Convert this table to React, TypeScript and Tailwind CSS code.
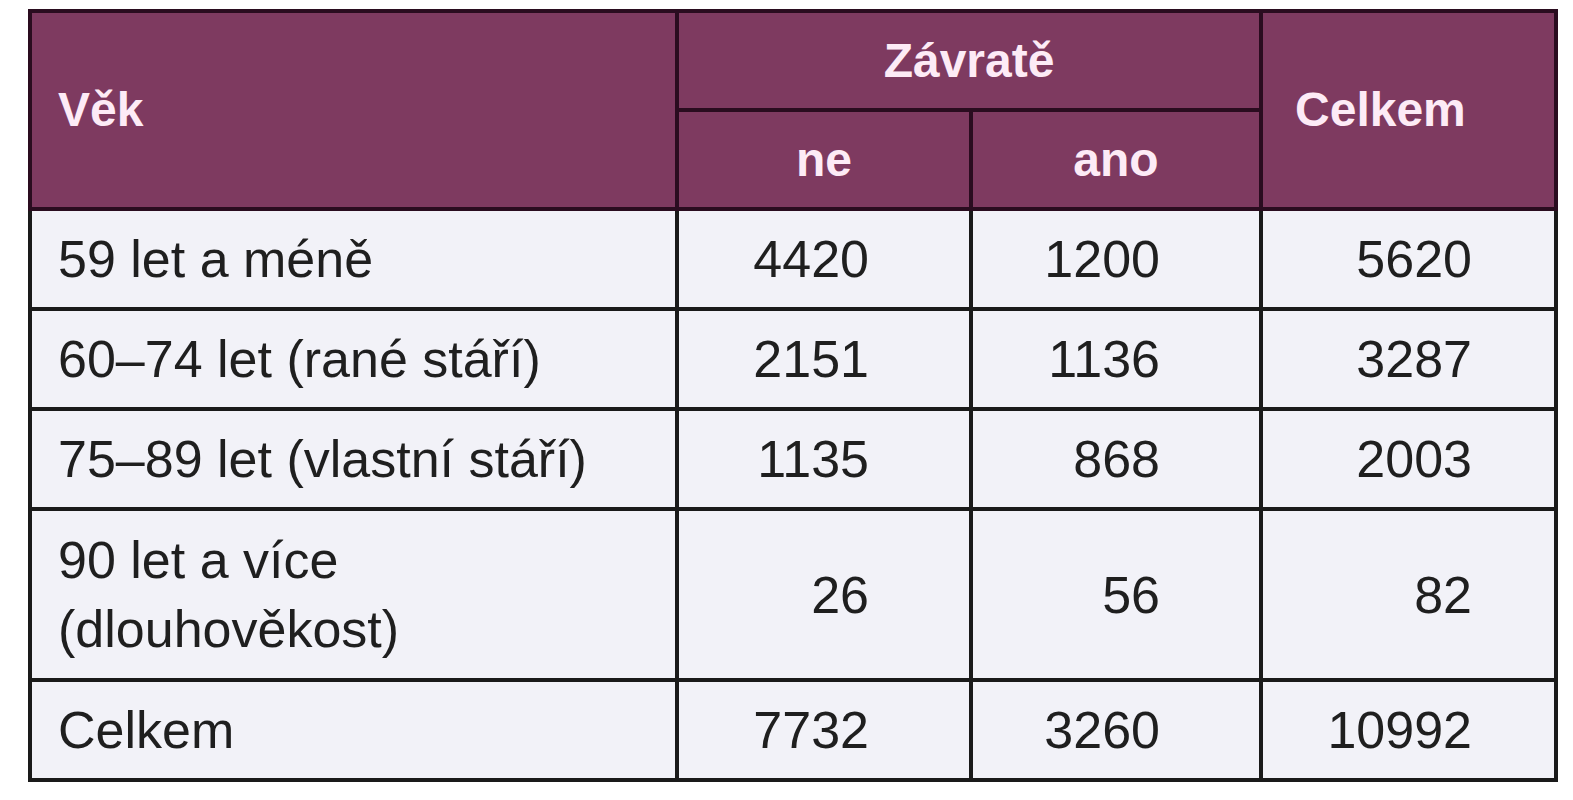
const rows: { label: React.ReactNode; ne: string; ano: string; total: string; tall?: boolean }[] = [
  { label: "59 let a méně", ne: "4420", ano: "1200", total: "5620" },
  { label: "60–74 let (rané stáří)", ne: "2151", ano: "1136", total: "3287" },
  { label: "75–89 let (vlastní stáří)", ne: "1135", ano: "868", total: "2003" },
  {
    label: (
      <>
        90 let a více
        <br />
        (dlouhověkost)
      </>
    ),
    ne: "26",
    ano: "56",
    total: "82",
    tall: true,
  },
  { label: "Celkem", ne: "7732", ano: "3260", total: "10992" },
];

const head = "border-[4px] border-[#2a0c1f] bg-[#7e3a60] font-bold text-[#fdebf6]";
const cell = "border-[4px] border-[#1a1a1a] bg-[#f2f2f8] text-[#1f1f1f]";

export default function App() {
  return (
    <div className="min-h-screen bg-white pl-[28px] pt-[9px] font-['Liberation_Sans',Arial,sans-serif]">
      <table className="w-[1526px] table-fixed border-collapse text-[52px] leading-none">
        <colgroup>
          <col className="w-[647px]" />
          <col className="w-[294px]" />
          <col className="w-[290px]" />
          <col className="w-[295px]" />
        </colgroup>
        <thead>
          <tr className="h-[99px]">
            <th rowSpan={2} className={`${head} pl-[26px] text-left align-middle text-[48px]`}>
              Věk
            </th>
            <th colSpan={2} className={`${head} text-center align-middle text-[48px]`}>
              Závratě
            </th>
            <th rowSpan={2} className={`${head} pl-[32px] text-left align-middle text-[48px]`}>
              Celkem
            </th>
          </tr>
          <tr className="h-[99px]">
            <th className={`${head} text-center align-middle text-[48px]`}>ne</th>
            <th className={`${head} text-center align-middle text-[48px]`}>ano</th>
          </tr>
        </thead>
        <tbody>
          {rows.map((r, i) => (
            <tr key={i} className={r.tall ? "h-[171px]" : "h-[100px]"}>
              <td className={`${cell} pl-[26px] text-left align-middle ${r.tall ? "leading-[69px]" : ""}`}>
                {r.label}
              </td>
              <td className={`${cell} pr-[100px] text-right align-middle`}>{r.ne}</td>
              <td className={`${cell} pr-[99px] text-right align-middle`}>{r.ano}</td>
              <td className={`${cell} pr-[82px] text-right align-middle`}>{r.total}</td>
            </tr>
          ))}
        </tbody>
      </table>
    </div>
  );
}
